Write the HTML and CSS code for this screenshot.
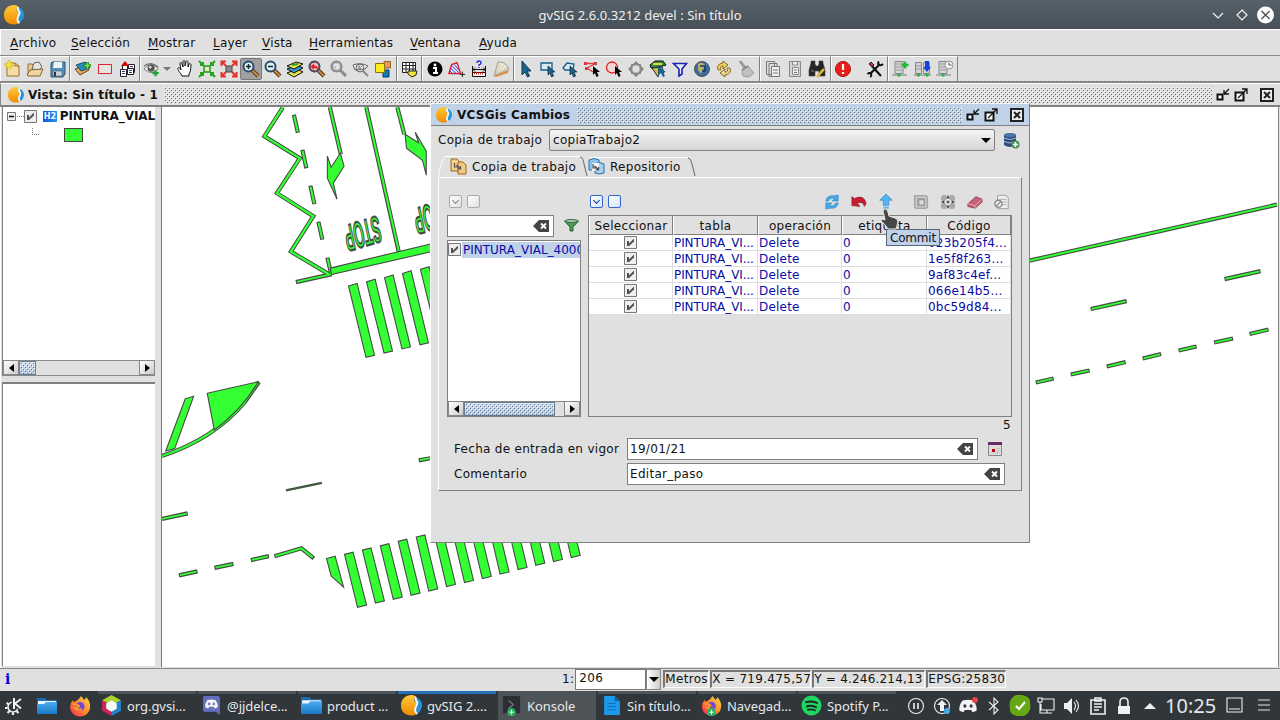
FILE: index.html
```html
<!DOCTYPE html>
<html lang="es">
<head>
<meta charset="utf-8">
<title>gvSIG 2.6.0.3212 devel : Sin título</title>
<link rel="stylesheet" href="styles.css">
</head>
<body>
<svg class="defs" width="0" height="0">
<defs>
<linearGradient id="gold" x1="0" y1="0" x2="0" y2="1"><stop offset="0" stop-color="#ffc83c"/><stop offset="1" stop-color="#f08c00"/></linearGradient>
<linearGradient id="fold" x1="0" y1="0" x2="0" y2="1"><stop offset="0" stop-color="#4aaef0"/><stop offset="1" stop-color="#1a78c8"/></linearGradient>
<linearGradient id="fx" x1="1" y1="0" x2="0" y2="1"><stop offset="0" stop-color="#ffe14a"/><stop offset=".5" stop-color="#ff8a2a"/><stop offset="1" stop-color="#f0245c"/></linearGradient>
<symbol id="gvsig" viewBox="0 0 20 20"><path d="M10 0C4 0 0 4 0 10s4 9.500 10 9.500c2 0 4-1 5-1.500-3-2-2-4 0-7 1-2 0-4-2-5-1-1-.5-3 1-4.500C13 .4 11 0 10 0z" fill="url(#gold)"/><path d="M15 2.500c-2 2 0 4 1 5 1 2-1 5-1.500 7-.3 2 1 3 1.500 3 3-2.500 4-5 4-8s-2-6-5-7z" fill="#2196dc"/><path d="M14.500 2c-2 2 0 3.500 1 5 .8 2-2.500 5-2 8 .2 1.500 1 2.500 2 3" fill="none" stroke="#eef6fc" stroke-width="2"/></symbol>
<symbol id="new" viewBox="0 0 18 18"><path d="M3 3h8l4 3v10H3z" fill="#f4dca4" stroke="#98712c"/><path d="M11 3v3h4" fill="none" stroke="#98712c"/><path d="M5 0l1.300 3L9 2 7.500 4.500 10 6 7 6.500 6.500 9 4.500 7 2 8.500 3 5.500 0 4.500 3 3z" fill="#f5e53a" stroke="#c5a500" stroke-width=".5"/></symbol>
<symbol id="open" viewBox="0 0 18 18"><path d="M2 14V4h4l2 2h6v9z" fill="#e8ca90" stroke="#94723c"/><path d="M6 9l2-6 5-1 3 5-3 3z" fill="#e4e4e4" stroke="#444" stroke-width=".8"/><path d="M1 15l3-5 13-1-3 7H2z" fill="#eed5a4" stroke="#86632c"/></symbol>
<symbol id="save" viewBox="0 0 18 18"><path d="M4 2h13v12l-2 3H3V4z" fill="#5890b8" stroke="#2c5270"/><path d="M6 2h8v6H5z" fill="#eef3f6"/><path d="M5 11h9v5H5z" fill="#ccd4da" stroke="#355a78" stroke-width=".6"/><path d="M7 12v4" stroke="#333" stroke-width="2"/></symbol>
<symbol id="addlayer" viewBox="0 0 18 18"><path d="M1 9l10-4 4 5-9 5z" fill="#e1a958" stroke="#66421c"/><path d="M2 5l9-3 5 6-9 3z" fill="#2787b5" stroke="#25516d"/><path d="M13.500 2v7M10 5.500h7" stroke="#1c7f24" stroke-width="3"/><path d="M13.500 2.500v6M10.500 5.500h6" stroke="#79df63" stroke-width="1.500"/></symbol>
<symbol id="rect" viewBox="0 0 18 18"><path d="M2.500 4.500h13v9h-13z" fill="#e8e4e4" stroke="#d92532"/></symbol>
<symbol id="locate" viewBox="0 0 18 18"><path d="M4.500 5.500h5v8h-5zM10.500 4.500h6v8h-6z" fill="#fff" stroke="#222"/><path d="M2.500 9.500h6v7h-6zM9.500 8.500h6v6h-6z" fill="#fff" stroke="#222"/><path d="M4 11.500h3M4 13.500h3M11 10.500h3M11 12.500h3M12 6.500h3" stroke="#33337c"/><path d="M3 6l4-5 4 5z" fill="#d30000"/></symbol>
<symbol id="eye" viewBox="0 0 20 18"><path d="M1 9q8-10 16 0-8 8-16 0z" fill="#eee" stroke="#777"/><path d="M1 6q7-6 16 1" fill="none" stroke="#777" stroke-width="1.500"/><circle cx="9" cy="8" r="4" fill="#555"/><circle cx="8" cy="7" r="1.500" fill="#ddd"/><path d="M14 10v7M10.500 13.500h7" stroke="#1ea339" stroke-width="2.500"/></symbol>
<symbol id="hand" viewBox="0 0 18 18"><path d="M6 16C5 13 1 10 2 8c1-1 2 0 3 2L4 4c0-2 2-2 2 0l1 3V2c0-2 2-2 2 0v4l1-4c0-2 2-1 2 0v5l1-3c1-1 2 0 2 1-.5 4 0 6-2 9v2z" fill="#fff" stroke="#111"/></symbol>
<symbol id="zin" viewBox="0 0 18 18"><path d="M6 6h6v6H6z" fill="#efe9c0" stroke="#159b15" stroke-width="1.500"/><path d="M1 1l4 4M17 1l-4 4M1 17l4-4M17 17l-4-4M2 5h3V2M13 2v3h3M2 13h3v3M13 16v-3h3" fill="none" stroke="#23a31c" stroke-width="2"/></symbol>
<symbol id="zfull" viewBox="0 0 18 18"><path d="M6 6h6v6H6z" fill="#888" stroke="#444"/><path d="M2 2l4 4M16 2l-4 4M2 16l4-4M16 16l-4-4M1.500 6V1.500H6M12 1.500h4.500V6M1.500 12v4.500H6M12 16.500h4.500V12" fill="none" stroke="#e3322a" stroke-width="2"/></symbol>
<symbol id="mag" viewBox="0 0 18 18"><path d="M10 10l6 6" stroke="#53330f" stroke-width="4"/><path d="M10 10l6 6" stroke="#ca8d42" stroke-width="2"/><circle cx="6.500" cy="6.500" r="5" fill="#d9f0f6" stroke="#284e6c" stroke-width="2"/></symbol>
<symbol id="magin" viewBox="0 0 18 18"><use href="#mag"/><path d="M6.500 4v5M4 6.500h5" stroke="#222" stroke-width="1.500"/></symbol>
<symbol id="magout" viewBox="0 0 18 18"><use href="#mag"/><path d="M4 6.500h5" stroke="#222" stroke-width="1.500"/></symbol>
<symbol id="layers" viewBox="0 0 18 18"><path d="M1 13l10-4 6 3-9 5z" fill="#e5e24a" stroke="#101010"/><path d="M1 9l10-4 6 3-9 5z" fill="#3b91c6" stroke="#101010"/><path d="M1 6l9-4 7 2-9 5z" fill="#e8e84b" stroke="#101010"/><path d="M6 5l6-1" stroke="#37983a" stroke-width="2"/></symbol>
<symbol id="magred" viewBox="0 0 18 18"><use href="#mag"/><circle cx="6.500" cy="6.500" r="4.500" fill="#efc6c4" stroke="#7a4a5c" stroke-width="1.500"/><path d="M2.500 6.500l3.500-3v2q4 0 4 4-2-2-4-1.500v2z" fill="#d22"/></symbol>
<symbol id="maggray" viewBox="0 0 18 18"><path d="M10 10l6 6" stroke="#8a8a8a" stroke-width="3"/><circle cx="6.500" cy="6.500" r="5" fill="#c6c6c6" stroke="#888" stroke-width="2"/><path d="M4 5h4v3H6" fill="none" stroke="#eee" stroke-width="1.500"/></symbol>
<symbol id="magmap" viewBox="0 0 18 18"><path d="M1 5q8-3 15 1l-3 3-10 1z" fill="#eee" stroke="#666"/><path d="M11 11l5 5" stroke="#888" stroke-width="2"/><circle cx="8" cy="8" r="4" fill="none" stroke="#666"/><path d="M5 5l5 5M9 4L5 10M11 5l-5 5" stroke="#777" stroke-width=".7"/></symbol>
<symbol id="squares" viewBox="0 0 18 18"><path d="M9 10h6v7H9z" fill="#087cb8" stroke="#034168"/><path d="M10 1.500h6.500V8H10z" fill="#e89858" stroke="#99602c"/><path d="M1.500 3.500h9v9h-9z" fill="#fbec20" stroke="#8a7400"/></symbol>
<symbol id="grid" viewBox="0 0 18 18"><path d="M2.500 2.500h13v10h-13zM2 5.500h14M2 9h14M6 2v10M9.500 2v10M13 2v10" fill="#fff" stroke="#222"/><path d="M8 11h9l-1 4-4 2-4-3z" fill="#f1e633" stroke="#222"/></symbol>
<symbol id="info" viewBox="0 0 18 18"><circle cx="9" cy="9" r="7.500"/><circle cx="9" cy="5" r="1.400" fill="#fff"/><path d="M7 8h3v5m-3 0h5" fill="none" stroke="#fff" stroke-width="2"/></symbol>
<symbol id="area" viewBox="0 0 20 18"><path d="M1 14L4 4l6-2 4 12z" fill="#e4e7fb" stroke="#e11b22" stroke-width="1.500"/><path d="M4 5l8 8M7 4l5 6M3 8l6 6M2 11l3 3" stroke="#1c38d2"/><path d="M16 12v6M13 15h6" stroke="#111"/></symbol>
<symbol id="dist" viewBox="0 0 18 18"><path d="M2.500 6v7M15.500 6v7M3 9.500h12M5 7.500l-2 2 2 2M13 7.500l2 2-2 2" fill="none" stroke="#111"/><path d="M2.500 12.500h13v4h-13z" fill="#fff" stroke="#111"/><path d="M4 13.500h10" stroke="#e4221f" stroke-width="2" stroke-dasharray="1 1"/><path d="M7 3q0-2 2-2t2 2q0 1-2 2v1M9 7v1" fill="none" stroke="#1c2dd7" stroke-width="1.400"/></symbol>
<symbol id="fan" viewBox="0 0 18 18"><path d="M2 16L6 2q8-1 11 7z" fill="#eee9d9" stroke="#8e8877" stroke-width=".8"/><path d="M2 16l7-13M2 16L13 4M2 16L16 7" stroke="#b9b19a" stroke-width=".7"/><path d="M2 16l15-6-1 3-12 4z" fill="#dc8f4b"/></symbol>
<symbol id="ptr" viewBox="0 0 18 18"><path d="M5 1v14l3-3 2.500 5 2-1L10 11h4z" fill="#19658f" stroke="#143850"/></symbol>
<symbol id="ptrrect" viewBox="0 0 18 18"><path d="M2 3h11v7H2z" fill="#dce9ef" stroke="#175e86" stroke-width="1.300"/><path d="M9 6v9l2-2 1.500 4 2-1-1.500-4h3z" fill="#19658f" stroke="#123" stroke-width=".7"/></symbol>
<symbol id="ptrpoly" viewBox="0 0 18 18"><path d="M2 8l4-5 7 1-1 6H4z" fill="#dce9ef" stroke="#175e86" stroke-width="1.300"/><path d="M9 6v9l2-2 1.500 4 2-1-1.500-4h3z" fill="#19658f" stroke="#123" stroke-width=".7"/></symbol>
<symbol id="ptrline" viewBox="0 0 18 18"><path d="M2 3.500h11M12 4L4 8l6 4" fill="none" stroke="#d83a3d" stroke-width="1.300"/><path d="M1 2h3v3H1zM11 2h3v3h-3zM2 7h3v3H2z" fill="#d83a3d"/><path d="M10 6v9l2-2 1.500 4 2-1-1.500-4h3z"/></symbol>
<symbol id="ptrcirc" viewBox="0 0 18 18"><circle cx="7" cy="7.500" r="5.500" fill="#eed7d7" stroke="#e51c20" stroke-width="1.300"/><path d="M10 6v9l2-2 1.500 4 2-1-1.500-4h3z"/></symbol>
<symbol id="ring" viewBox="0 0 18 18"><path d="M9 1l3 3h2v2l3 3-3 3v2h-2l-3 3-3-3H4v-2L1 9l3-3V4h2z" fill="#858585"/><circle cx="9" cy="9" r="4" fill="#e0e0e0" stroke="#aaa"/></symbol>
<symbol id="bird" viewBox="0 0 18 18"><path d="M1 5l5-4h8l3 4-7 2-8 1z" fill="#318b3c" stroke="#111"/><path d="M4 4h9" stroke="#edd13b" stroke-width="2"/><path d="M3 8l10-1 2 6-5-1-1 5-4-6z" fill="#d8b83a" stroke="#143044"/><path d="M9 6v10l3-3 2 4 2-1-2-4h3z" fill="#1b618d"/></symbol>
<symbol id="filter" viewBox="0 0 18 18"><path d="M2.500 3.500h13L11 9v5l-3 2V9z" fill="#e9ecff" stroke="#1b20b5" stroke-width="1.600"/></symbol>
<symbol id="globe" viewBox="0 0 18 18"><circle cx="9" cy="9" r="7.500" fill="#396d9f" stroke="#4d5054"/><path d="M5 4q4-3 7 1l-2 5-2 4-3-4z" fill="#b7ae72"/><path d="M7 6h5v5H9" fill="none" stroke="#183b60" stroke-width="1.500"/></symbol>
<symbol id="swap" viewBox="0 0 18 18"><path d="M3 10Q1 4 8 3V1l5 4-5 4V6Q4 6 6 10z" fill="#f0cf66" stroke="#8a6a16"/><path d="M15 8q2 6-5 7v2l-5-4 5-4v3q4 0 2-4z" fill="#eed792" stroke="#8a6a16"/></symbol>
<symbol id="brush" viewBox="0 0 18 18"><path d="M3 1l5 7" stroke="#999" stroke-width="3"/><path d="M5 10l6-4 6 7-5 4-6-1z" fill="#c1c1c1" stroke="#999"/><path d="M5 10l6-4" stroke="#888" stroke-width="2"/></symbol>
<symbol id="copy" viewBox="0 0 18 18"><path d="M2.500 1.500h8v13h-8zM5 3.500h8v13H5z" fill="#dedede" stroke="#777"/><path d="M7.500 6.500h8v10h-8z" fill="#f0f0f0" stroke="#777"/><path d="M9 10h5M9 13h5" stroke="#777"/></symbol>
<symbol id="paste" viewBox="0 0 18 18"><path d="M3.500 1.500h11v15h-11z" fill="#d5d5d5" stroke="#888"/><path d="M6.500 2v3h5V2M6.500 7.500h6v7h-6z" fill="#f0f0f0" stroke="#888"/><path d="M8 10h3M8 12.500h3" stroke="#777"/></symbol>
<symbol id="bino" viewBox="0 0 18 18"><path d="M3 3V1h4v3l1 2h2l1-2V1h4v2l2 7v6h-6v-5H7v5H1v-6z" fill="#252525" stroke="#444" stroke-width=".6"/><path d="M3 11h3M12 11h3" stroke="#888"/><path d="M9 17l7-8" stroke="#efb636" stroke-width="2.500"/></symbol>
<symbol id="alert" viewBox="0 0 18 18"><circle cx="9" cy="9" r="7.500" fill="#e82018" stroke="#ae1009"/><path d="M9 4v6M9 12v2" stroke="#fff" stroke-width="2.200"/></symbol>
<symbol id="tools" viewBox="0 0 18 18"><path d="M4 14L14 4M5 5l10 11" stroke="#111" stroke-width="2.200"/><path d="M1.500 14q2-2 3.500 0 1 2-1 3M13 1.500q-2 2 0 3.500 2 1 4-1" fill="none" stroke="#111" stroke-width="1.800"/><path d="M3 4l2-2 3 3-2 2z" fill="#bb333c" stroke="#222"/></symbol>
<symbol id="server" viewBox="0 0 18 18"><path d="M3 1.500h8v12H3z" fill="#d4d4d4" stroke="#888"/><path d="M4 4h6M4 7h6M4 10h6" stroke="#999"/><path d="M0 15h15" stroke="#777"/><circle cx="7" cy="15" r="1.800" fill="#22b94c"/></symbol>
<symbol id="srvadd" viewBox="0 0 18 18"><use href="#server"/><path d="M13 1.500v7M9.500 5h7" stroke="#20b93e" stroke-width="2.600"/></symbol>
<symbol id="srvdown" viewBox="0 0 18 18"><path d="M1.500 2.500h6v11h-6zM9.500 2.500h6v11h-6z" fill="#d4d4d4" stroke="#888"/><path d="M2 6h5M2 9h5" stroke="#999"/><path d="M0 15h17" stroke="#777"/><circle cx="4.500" cy="15" r="1.800" fill="#22b94c"/><path d="M11 1v6H9l4 5 4-5h-2V1z" fill="#1741dc"/><circle cx="13" cy="15" r="1.800" fill="#22b94c"/></symbol>
<symbol id="srvclock" viewBox="0 0 18 18"><use href="#server"/><circle cx="13" cy="5" r="4" fill="#f5f5f5" stroke="#999"/><path d="M13 2.500V5h2.500" fill="none" stroke="#555"/></symbol>
<symbol id="erase" viewBox="0 0 17 14"><path d="M0 7l6-6h10v12H6z" fill="#444"/><path d="M8 4.500l5 5M13 4.500l-5 5" stroke="#fff" stroke-width="1.800"/></symbol>
<symbol id="cbx" viewBox="0 0 13 13"><path d="M.5.500h12v12H.5z" fill="#eee" stroke="#777"/><path d="M3 5h2v2.500L9.500 3H10v2.500L5 10H3z" fill="#505050"/></symbol>
<symbol id="folder" viewBox="0 0 20 18"><path d="M0 1h8l2 2h10v14H0z" fill="#1c6cad"/><path d="M1 4h18v4H1z" fill="#eef6fb"/><path d="M0 7h7l2-2h11v12H0z" fill="url(#fold)"/></symbol>
<symbol id="firefox" viewBox="0 0 22 22"><path d="M12 1q2 2 3 4 2-1 2-3 5 5 4 11a10 9 0 01-20-1q0-4 3-7 0 2 1 2 4-1 7-6z" fill="url(#fx)"/><circle cx="11" cy="11.500" r="4.500" fill="#7644d8"/><path d="M4 9q4 0 6 2-1 2-4 2 3 3 7 1" fill="none" stroke="#ff9a20" stroke-width="2"/></symbol>
<symbol id="discord" viewBox="0 0 24 18"><path d="M5 2q7-2 14 0 5 7 4 13l-5 2-2-3H8l-2 3-5-2Q0 8 5 2z" fill="#f3f3f5"/><ellipse cx="8" cy="9" rx="2" ry="2.300" fill="var(--eyes)"/><ellipse cx="16" cy="9" rx="2" ry="2.300" fill="var(--eyes)"/></symbol>
<symbol id="min" viewBox="0 0 14 14"><path d="M1.500 6.500h5v5h-5z" fill="#fff" stroke="#111" stroke-width="2"/><path d="M13 1L8 6M8 2v4h5" fill="none" stroke="#111" stroke-width="1.300"/></symbol>
<symbol id="max" viewBox="0 0 14 14"><path d="M1.500 4.500h8v8h-8z" fill="#fff" stroke="#111" stroke-width="2"/><path d="M4 10l9-9M8 1h5v5" fill="none" stroke="#111" stroke-width="1.300"/></symbol>
<symbol id="close" viewBox="0 0 14 14"><path d="M1 1h12v12H1z" fill="#eee" stroke="#222" stroke-width="2"/><path d="M4 4l6 6M10 4l-6 6" stroke="#222" stroke-width="2"/></symbol>
</defs></svg>

<header class="titlebar"><svg class="logo"><use href="#gvsig"/></svg><h1>gvSIG 2.6.0.3212 devel : Sin título</h1>
<svg class="winbtns" viewBox="0 0 70 20"><path d="M3 8l5 5 5-5M32 5l5 5-5 5-5-5z" fill="none" stroke="#eff0f1" stroke-width="1.200"/><circle cx="55.500" cy="10" r="8.500" fill="#fcfcfc"/><path d="M51.500 6l8 8M59.500 6l-8 8" stroke="#475057" stroke-width="1.300"/></svg></header>
<nav class="menubar"><span><u>A</u>rchivo</span><span><u>S</u>elección</span><span><u>M</u>ostrar</span><span><u>L</u>ayer</span><span><u>V</u>ista</span><span><u>H</u>erramientas</span><span><u>V</u>entana</span><span><u>A</u>yuda</span></nav>
<div class="toolbar">
<div class="grp g1"><svg><use href="#new"/></svg><svg><use href="#open"/></svg><svg><use href="#save"/></svg></div>
<div class="grp g2"><svg><use href="#addlayer"/></svg><svg><use href="#rect"/></svg><svg><use href="#locate"/></svg></div>
<div class="grp g3"><svg><use href="#eye"/></svg><i class="drop"></i><svg><use href="#hand"/></svg><svg><use href="#zin"/></svg><svg><use href="#zfull"/></svg><svg class="on"><use href="#magin"/></svg><svg><use href="#magout"/></svg><svg><use href="#layers"/></svg><svg><use href="#magred"/></svg><svg><use href="#maggray"/></svg><svg><use href="#magmap"/></svg><svg><use href="#squares"/></svg></div>
<div class="grp g4"><svg><use href="#grid"/></svg></div>
<div class="grp g5"><svg><use href="#info"/></svg><svg><use href="#area"/></svg><svg><use href="#dist"/></svg><svg><use href="#fan"/></svg></div>
<div class="grp g6"><svg><use href="#ptr"/></svg><svg><use href="#ptrrect"/></svg><svg><use href="#ptrpoly"/></svg><svg><use href="#ptrline"/></svg><svg><use href="#ptrcirc"/></svg><svg><use href="#ring"/></svg><svg><use href="#bird"/></svg><svg><use href="#filter"/></svg><svg><use href="#globe"/></svg><svg><use href="#swap"/></svg><svg><use href="#brush"/></svg></div>
<div class="grp g7"><svg><use href="#copy"/></svg><svg><use href="#paste"/></svg><svg><use href="#bino"/></svg></div>
<div class="grp g8"><svg><use href="#alert"/></svg><svg><use href="#tools"/></svg></div>
<div class="grp g9"><svg><use href="#srvadd"/></svg><svg><use href="#srvdown"/></svg><svg><use href="#srvclock"/></svg></div>
</div>
<div class="viewtitle"><svg class="vlogo"><use href="#gvsig"/></svg><b>Vista: Sin título - 1</b><i class="bumps"></i><svg class="wb"><use href="#min"/></svg><svg class="wb"><use href="#max"/></svg><svg class="wb last"><use href="#close"/></svg></div>
<main>
<aside>
<div class="toc">
<div class="node"><svg class="tree" viewBox="0 0 36 32"><path d="M3.500 5.500h8v8h-8z" fill="#eee" stroke="#777"/><path d="M5 9.500h5" stroke="#111" stroke-width="1.500"/><path d="M13 9.500h7M28.500 21v6.500H40" fill="none" stroke="#777" stroke-dasharray="1 1"/></svg><svg class="cb"><use href="#cbx"/></svg><span class="h2">H2</span><b>PINTURA_VIAL</b></div>
<div class="swrow"><i class="swatch"></i></div>
<div class="grow"></div>
<div class="scroll"><i class="sb l"></i><i class="thumb t1"></i><i class="track"></i><i class="sb r"></i></div>
</div>
<div class="lower"></div>
</aside>
<svg class="map" viewBox="162 107 1117 560">
<g fill="none" stroke="#454c45" stroke-width="4.200" stroke-linecap="butt" id="lines">
<path id="zig" d="M283 107L264.500 136 300 158 277 193 313.500 216 291 251.500 329 274"/>
<path id="dash" d="M294 114.500l4 18M302.500 149.500l4 18.500M310.500 185.500l4 18.500M318.500 221.500l4 18M327.500 257.500l4 17M296 282l36-8M366.500 107L399 252M397.500 107l7 27M330 107l11 47M1029 260.800L1278 204.500M274.500 556.500l27-8 12.500 10M162 456Q214 439 245 402L259 382"/>
<path id="small" d="M179 575.500l18.500-4M214.500 568l19-4M251 560.300l18-4M162 519l25.700-5.500M419 460.500l13-2.500M1036.500 382.500l18-4M1071.500 374.500l19-4M1107.500 366.500l19-4.500M1143.500 358.500l18.500-4.500M1179.500 350.500l18-4M1215 342.500l19-4M1250.500 334l19-4.500M1091.500 309l36-8M1225.500 279l36-8"/>
</g>
<g fill="none" stroke="#3f3" stroke-width="2"><use href="#zig" stroke-width="2"/><path d="M283 107L264.500 136 300 158 277 193 313.500 216 291 251.500 328 273.500M294.200 115.500l3.600 16M302.700 150.500l3.600 16.500M310.700 186.500l3.600 16.500M318.700 222.500l3.600 16M327.700 258.500l3.600 15M297 281.800l35-7.800M366.500 107L399 251M397.500 107l7 27M330 107l11 47M1029 260.800L1278 204.500M275.500 556.200l26-7.700 11.500 9.200M162 456Q214 439 245 402L258 383"/><path stroke-width="1.800" d="M180 575.300l16.500-3.600M215.500 567.800l17-3.600M252 560.100l16-3.600M162 519l24.700-5.300M420 460.300l12-2.300M1037.500 382.300l16-3.600M1072.500 374.300l17-3.600M1108.500 366.300l17-4M1144.500 358.300l16.500-4M1180.500 350.300l16-3.600M1216 342.300l17-3.600M1251.500 333.800l17-4M1092.500 308.800l34-7.600M1226.500 278.800l34-7.600"/></g>
<path d="M286 490.500l36-7.500" stroke="#3f573c" stroke-width="2.200"/>
<g fill="#3f3" stroke="#444c44" stroke-width="1.100">
<path d="M340.500 153l3.700 13-10.700 17 3.700 16-9.700-21v-22l3.800 11zM405.300 134l13.400 8.500-3.200-10.500 11 19v24l-3.800-15-16-12zM330.500 268L432 243.500v8L331.500 274.500zM185.300 398.700l8.400-2.400-19 52.400-9 2.300zM207.300 393.300l51-11.600Q242 410 214.300 430zM326.700 558.700l8.600-2.400 8.400 31-12.400-11.300z"/>
<path d="M348.700 286l8.600-2.700 17.400 72-8.500 2zM366.700 281.800l8.600-2.700 17.400 72-8.500 2zM384.700 277.600l8.600-2.700 17.400 72-8.500 2zM402.700 273.400l8.600-2.700 17.400 72-8.500 2zM420.700 269.200l8.600-2.700 17.400 72-8.500 2z"/>
<path d="M344.700 554.500l8.600-2.200 13.400 53-9 2.200zM362.600 550.300l8.600-2.200 13.400 53-9 2.200zM380.500 546l8.600-2.200 13.400 53.500-9 2.200zM398.400 541.500l8.600-2.200 13.300 54-9 2.200zM416.500 537.200l8.600-2.200 12.900 54-9 2.200zM434 532l8.600-2.200 13.200 54.800-9 2.200zM452 528l8.600-2.200 13.200 54.800-9 2.200zM469.800 524l8.600-2.200 13.200 54.800-9 2.200zM487.600 519.500l8.600-2.200 13.200 54.800-9 2.200zM505.600 515l8.600-2.200 13.200 54.800-9 2.200zM523.300 510.700l8.600-2.200 13.200 54.800-9 2.200zM541 507l8.600-2.200 13.200 54.800-9 2.200zM558.800 502.900l8.600-2.200 13.200 54.800-9 2.200z"/>
<text class="paint" transform="matrix(-1.020 .32 -.6 -2.900 378 215.500)">STOP</text>
<text class="paint" transform="matrix(-1.020 .32 -.6 -2.900 447.500 198.500)">STOP</text>
</g>
</svg>
</main>

<footer class="status"><b class="inf">i</b><span class="ratio">1:</span><span class="field">206</span><span class="arrow"></span><span class="cell c1">Metros</span><span class="cell c2">X = 719.475,57</span><span class="cell c3">Y = 4.246.214,13</span><span class="cell c4">EPSG:25830</span></footer>

<footer class="taskbar">
<div class="launch"><svg viewBox="0 0 20 20"><circle cx="8" cy="11" r="5" fill="none" stroke="#eee" stroke-width="1.600"/><path d="M1.500 7l2 1M0 12h2.500M2.500 17l2-2M8 19v-2.500M13.500 17l-2-2" stroke="#eee" stroke-width="2.200"/><path d="M9 1v13M16.500 2L10 7.500l6.500 5.500" stroke="#31363b" stroke-width="4.500" fill="none"/><path d="M9 2v11M16 3l-6 4.500 6 5" stroke="#eff0f1" stroke-width="2" fill="none"/></svg><svg><use href="#folder"/></svg><svg><use href="#firefox"/></svg></div>
<div class="task"><svg viewBox="0 0 20 20"><path d="M10 0l9 5-9 5-9-5z" fill="#aad230"/><path d="M1 5l9 5v10l-9-5z" fill="#c8255d"/><path d="M19 5l-9 5v10l9-5z" fill="#2384cf"/><path d="M10 5l5 3v5l-5 3-5-3V8z" fill="#f5faf2"/></svg>org.gvsi...</div>
<div class="task"><svg class="dsc" viewBox="0 0 20 20"><path d="M3 1h13q2 0 2 2v16l-4-3H3q-1 0-1-2V3q0-2 1-2z" fill="#6370c0"/><use href="#discord" x="3.500" y="3" width="13" height="11"/></svg>@jjdelce...</div>
<div class="task"><svg><use href="#folder"/></svg>product ...</div>
<div class="task active"><svg><use href="#gvsig"/></svg>gvSIG 2....</div>
<div class="task hot"><svg viewBox="0 0 20 22"><path d="M1 1h18v18H1z" fill="#2a2e32"/><path d="M7 6l5 4-5 4" fill="none" stroke="#aaa"/><circle cx="10" cy="18" r="4.500" fill="#27ae60"/><path d="M10 15.500v5M7.500 18h5" stroke="#fff"/></svg>Konsole</div>
<div class="task"><svg viewBox="0 0 20 20"><path d="M3 1h10l5 5v13H3z" fill="#1b99ea"/><path d="M13 1l5 5h-5z" fill="#0a69ab"/><path d="M6 8h8M6 11h8M6 14h8" stroke="#0873b8"/></svg>Sin título...</div>
<div class="task"><svg viewBox="0 0 22 22"><use href="#firefox"/><circle cx="11" cy="18" r="4.500" fill="#27ae60"/><path d="M11 15.500v5M8.500 18h5" stroke="#fff"/></svg>Navegad...</div>
<div class="task"><svg viewBox="0 0 20 20"><circle cx="10" cy="10" r="9.500" fill="#1ed760"/><path d="M4 7q7-2 12 1M5 11q5-2 10 1M6 14q5-1 8 1" fill="none" stroke="#202527" stroke-width="1.800"/></svg>Spotify P...</div>
<div class="tray">
<svg viewBox="0 0 20 20"><circle cx="10" cy="10" r="7.500" class="ln"/><path d="M8 7v6M12 7v6" class="ln b"/></svg>
<svg viewBox="0 0 20 20"><circle cx="10" cy="10" r="7.500" class="ln"/><path d="M10 4l5 5h-3v6H8V9H5z" fill="#eff0f1"/><circle cx="15" cy="15" r="3" fill="#3daee9"/></svg>
<svg class="dt" viewBox="0 0 20 20"><use href="#discord" y="3" width="20" height="14"/><circle cx="17" cy="4" r="3" fill="#ed4245"/></svg>
<svg viewBox="0 0 20 20"><path d="M5 6l9 8-4 4V2l4 4-9 8" class="ln"/></svg>
<svg class="big" viewBox="0 0 22 22"><path d="M7 0h6q9 2 8 8 2 9-6 13H9Q0 20 1 13-1 4 7 0z" fill="#66a814"/><path d="M7 11l3 3 6-7" fill="none" stroke="#fff" stroke-width="2.200"/></svg>
<svg viewBox="0 0 20 20"><path d="M6 3h12v11H5V8M8 17h8M11 14v3M2 2h4v4H2zM4 6v11h4" class="ln"/></svg>
<svg viewBox="0 0 20 20"><path d="M2 7h3l5-5v16l-5-5H2z" fill="#eff0f1"/><path d="M12 6q3 4 0 8M14 4q5 6 0 12" class="ln"/></svg>
<svg viewBox="0 0 20 20"><path d="M3 4h14v14H3zM7 2h6v3H7zM6 8h8M6 11h8M6 14h5" class="ln b"/></svg>
<svg viewBox="0 0 20 20"><path d="M4 10h12v8H4z" fill="#eff0f1"/><path d="M6 10V6q0-4 4-4t4 4v4" class="ln b"/></svg>
<svg viewBox="0 0 20 20"><path d="M4 13l6-6 6 6z" fill="#eff0f1"/></svg>
</div>
<span class="clock">10:25</span>
<svg class="desk" viewBox="0 0 50 20"><path d="M3 3h15v14H3zM5 14h11" class="ln"/><path d="M34 5h12M34 10h12M34 15h12" stroke="#898d90" stroke-width="2"/></svg>
</footer>

<section class="dialog">
<div class="dtitle"><svg class="dlogo"><use href="#gvsig"/></svg><b>VCSGis Cambios</b><i class="bumps"></i><svg class="wb"><use href="#min"/></svg><svg class="wb"><use href="#max"/></svg><svg class="wb last"><use href="#close"/></svg></div>
<div class="copyrow"><label>Copia de trabajo</label><div class="combo">copiaTrabajo2<i></i></div>
<svg viewBox="0 0 17 17"><path d="M1 3q6-4 12 0v10q-6 4-12 0z" fill="#304e79"/><ellipse cx="7" cy="3" rx="6" ry="2" fill="#4d75a6"/><path d="M1 6q6 3 12 0M1 9.500q6 3 12 0" fill="none" stroke="#9fb7d4" stroke-width="1"/><circle cx="12.500" cy="12.500" r="4" fill="#4b9156"/><path d="M12.500 10v5M10 12.500h5" stroke="#fff" stroke-width="1.500"/></svg></div>
<div class="tabs"><svg class="tabline" viewBox="0 0 598 21"><path d="M7 20V17q3-14 6-16.500h135M158 1.500h98" fill="none" stroke="#fff"/><path d="M148 1q3 0 4 7l3 12M256 2q3 0 4 6l3 12" fill="none" stroke="#666"/></svg>
<div class="tab one"><svg viewBox="0 0 17 17"><path d="M1 1h6l3 3v9H1z" fill="#f1cf8e" stroke="#a06516"/><path d="M8 4h5l3 3v9H8z" fill="#f0ca82" stroke="#a06516"/><path d="M4.500 5v4h4M6.500 7l4 4m0-3v3h-3" fill="none" stroke="#555" stroke-width="1.200"/></svg>Copia de trabajo</div>
<div class="tab two"><svg viewBox="0 0 17 17"><path d="M1 2q5-3 10 0v10H1z" fill="#8cc3ee" stroke="#2874ac"/><path d="M7 6q5-3 9 0v9q-5 2-9 0z" fill="#a4d0f3" stroke="#286fa5"/><path d="M4 5h7v8H4z" fill="#eef4fa"/><path d="M5 6v4h3M6.500 8l4 4m0-3v3h-3" fill="none" stroke="#444" stroke-width="1.200"/></svg>Repositorio</div></div>
<div class="pane">
<div class="tools">
<i class="sq dn"></i><i class="sq"></i><i class="sq blue dn gap"></i><i class="sq blue"></i>
<div class="acts">
<svg viewBox="0 0 18 18"><path d="M2 8q1-7 9-6l5-1v7H9l3-3Q6 4 5 8zM16 10q-1 7-9 6l-5 1v-7h7l-3 3q6 1 7-3z" fill="#47a9eb" stroke="#2c7dbd" stroke-width=".6"/></svg>
<svg class="undo" viewBox="0 0 18 18"><path d="M1 3l3 2q11-5 13 6l-2 3q-1-6-8-4l3 4-9-1z" fill="#c71e31" stroke="#8b1726" stroke-width=".7"/></svg>
<svg class="up" viewBox="0 0 18 18"><path d="M9 0l7 7h-4v6H6V7H2z" fill="#55b5f4" stroke="#287eb7" stroke-width=".7"/><path d="M6 15.500h6" stroke="#55b5f4" stroke-width="2"/></svg>
<svg class="sel" viewBox="0 0 18 18"><path d="M2 1h13l2 2v12l-2 2H3l-2-2V2z" fill="#a6a6a6"/><path d="M3.500 3.500h11v11h-11z" fill="none" stroke="#e4e4e4"/><path d="M6.500 6.500h6v6h-6z" fill="#ddd" stroke="#888"/></svg>
<svg viewBox="0 0 18 18"><path d="M3 1h12l2 3v11l-2 2H3l-2-2V4z" fill="#aaa"/><path d="M9 1v16M1 9h16" stroke="#e8e8e8" stroke-width="4"/><path d="M9 1l2.500 4h-5zM9 17l2.500-4h-5zM1 9l4-2.500v5zM17 9l-4-2.500v5zM7.500 7.500h3v3h-3z" fill="#555"/></svg>
<svg viewBox="0 0 18 18"><path d="M1 11l9-8 7 3v3l-8 7-8-2z" fill="#c5617b" stroke="#964158"/><path d="M1 11l8 2 8-7M9 13v3" fill="none" stroke="#eda7b7"/></svg>
<svg viewBox="0 0 18 18"><path d="M4 1.500h10l2 3v12H4z" fill="#eee" stroke="#999"/><path d="M6 6h8M6 9h8M9 12h5" stroke="#aaa"/><circle cx="5" cy="11" r="4" fill="#eee" stroke="#888" stroke-width="1.500"/><path d="M2 14l6-6" stroke="#888" stroke-width="1.500"/></svg>
</div></div>
<div class="cols">
<div class="left"><div class="search"><div class="inp"><svg class="er"><use href="#erase"/></svg></div><svg class="fun" viewBox="0 0 15 13"><path d="M.5 2h14L9 8v4H6V8z" fill="#4e9b55" stroke="#27632f"/><ellipse cx="7.500" cy="2" rx="6.500" ry="1.500" fill="#b4c4b3" stroke="#386c3c"/></svg></div>
<div class="list"><div class="lrow"><svg class="cb"><use href="#cbx"/></svg><span>PINTURA_VIAL_4000</span></div><div class="grow"></div><div class="scroll"><i class="sb l"></i><i class="thumb t2"></i><i class="track"></i><i class="sb r"></i></div></div></div>
<div class="table">
<div class="tr th"><span>Seleccionar</span><span>tabla</span><span>operación</span><span>etiqueta</span><span>Código</span></div>
<div class="tr"><span><svg class="cb"><use href="#cbx"/></svg></span><span class="tn">PINTURA_VI...</span><span>Delete</span><span>0</span><span>023b205f4...</span></div>
<div class="tr"><span><svg class="cb"><use href="#cbx"/></svg></span><span class="tn">PINTURA_VI...</span><span>Delete</span><span>0</span><span>1e5f8f263...</span></div>
<div class="tr"><span><svg class="cb"><use href="#cbx"/></svg></span><span class="tn">PINTURA_VI...</span><span>Delete</span><span>0</span><span>9af83c4ef...</span></div>
<div class="tr"><span><svg class="cb"><use href="#cbx"/></svg></span><span class="tn">PINTURA_VI...</span><span>Delete</span><span>0</span><span>066e14b5...</span></div>
<div class="tr"><span><svg class="cb"><use href="#cbx"/></svg></span><span class="tn">PINTURA_VI...</span><span>Delete</span><span>0</span><span>0bc59d84...</span></div>
</div></div>
<div class="count">5</div>
<div class="form"><label>Fecha de entrada en vigor</label><div class="inp date">19/01/21<svg class="er"><use href="#erase"/></svg></div><svg class="cal" viewBox="0 0 14 14"><path d="M.5.500h13v13H.5z" fill="#ddd" stroke="#888"/><path d="M0 0h14v3H0z" fill="#692b67"/><path d="M4 7h3v3H4z" fill="#ba001b"/><path d="M9 6v6M11 6v6M3 11h7" stroke="#aaa" stroke-dasharray="1 1"/></svg></div>
<div class="form"><label>Comentario</label><div class="inp comm">Editar_paso<svg class="er"><use href="#erase"/></svg></div></div>
</div>
</section>
<div class="tip">Commit</div>
<svg class="cursor" viewBox="0 0 20 22"><path d="M5 1q3-1 4 3l1 4 6 2q3 1 3 4l-2 7H9q-3-5-7-8 0-3 4-1L4 3z" fill="#474747" stroke="#eee" stroke-width="1"/></svg>
</body>
</html>
```
FILE: styles.css
```css
*{box-sizing:border-box}
body{margin:0;width:1280px;height:720px;overflow:hidden;position:relative;display:flex;flex-direction:column;background:#e0e0e0;color:#111;font:12px "DejaVu Sans",sans-serif;letter-spacing:.3px;white-space:nowrap}
svg{flex:none;display:block}
.defs{position:absolute}
b{letter-spacing:0}
.titlebar{height:29px;flex:none;display:flex;align-items:center;padding:0 0 0 4px;background:linear-gradient(#56616a,#475057);color:#eff0f1;font-family:"Noto Sans",sans-serif;letter-spacing:.05px}
.logo{width:20px;height:20px}
h1{flex:1;margin:0 0 0 46px;text-align:center;font-size:13px;font-weight:400}
.winbtns{width:70px;height:20px}
.menubar{height:26px;flex:none;display:grid;grid-template-columns:61px 77px 65px 49px 47px 101px 69px 60px;align-items:center;padding-left:9px;border-top:1px solid #fff;border-left:1px solid #fff;letter-spacing:.2px}
.menubar u{text-underline-offset:2px}
.toolbar{height:28px;flex:none;display:flex;border-top:1px solid #888;border-bottom:2px solid #888}
.grp{height:25px;display:flex;align-items:center;border-right:1px solid #808080;border-top:1px solid #fff;border-left:1px solid #fff;flex:none}
.grp svg{width:22px;height:22px;padding:2px}
.g1{width:70px;padding-left:1px}.g2{width:70px;padding-left:1px}.g3{width:257px}.g4{width:25px}.g5{width:92px;padding-left:1px}.g6{width:246px}.g7{width:71px;padding-left:1px}.g8{width:57px}.g9{width:70px;padding-left:1px}
.g8 svg+svg{margin-left:10px}
.drop{height:0;border:4px solid transparent;border-top-color:#777;border-bottom:0;width:8px;margin:0 3px 0 0}
.on{background:#a0a0a0;border:1px solid #777;padding:1px!important;border-radius:2px}
.viewtitle{height:24px;flex:none;display:flex;align-items:center;padding:0 6px 0 7px;border-bottom:2px solid #808080;border-top:1px solid #fff;border-left:1px solid #888}
.viewtitle b,.dtitle b{font-size:12px}
.vlogo{width:16px;height:16px;margin-right:4px}
.viewtitle b{width:131px;margin-right:5px;letter-spacing:.15px}
.bumps{flex:1;height:16px;background:url("data:image/svg+xml,%3Csvg xmlns='http://www.w3.org/2000/svg' width='4' height='4' shape-rendering='crispEdges'%3E%3Cpath d='M0 0h1v1H0zM2 2h1v1H2z' fill='%23fff'/%3E%3Cpath d='M1 1h1v1H1zM3 3h1v1H3z' fill='%23666'/%3E%3C/svg%3E")}
.wb{width:14px;height:14px;margin-left:4px}
.wb.last{margin-left:12px}
main{height:561px;flex:none;display:flex}
aside{width:161px;flex:none;padding-left:1px;border-left:1px solid #fff;background:#e0e0e0}
.toc,.lower{width:153px;background:#fff;border-left:1px solid #808080}
.toc{height:269px;display:flex;flex-direction:column;border-bottom:1px solid #888}
.node{height:20px;display:flex;align-items:flex-start;padding-left:1px}
.tree{width:36px;height:32px;margin-right:-16px}
.cb{width:13px;height:13px}
.node .cb{margin-top:3px}
.h2{width:15px;height:11px;margin:4px 3px 0 6px;background:linear-gradient(90deg,#1555d8,#2496f4);color:#fff;font:bold 8px/11px "DejaVu Sans";text-align:center;letter-spacing:0}
.node b{font-size:12px;line-height:18px;letter-spacing:-.1px}
.swrow{height:16px;padding:1px 0 0 61px}
.swatch{display:block;width:19px;height:14px;background:#3f3;border:1px solid #444}
.grow{flex:1}
.scroll{height:15px;display:flex;border-top:1px solid #888;background:#e0e0e0}
.sb{width:16px;display:flex;align-items:center;justify-content:center;background:linear-gradient(135deg,#fff,#ccc);border:1px solid #888;border-top:0}
.sb:before{content:"";border:4px solid transparent;border-right:5px solid #000;border-left:0}
.sb.r:before{border-right:0;border-left:5px solid #000}
.thumb{background:url("data:image/svg+xml,%3Csvg xmlns='http://www.w3.org/2000/svg' width='4' height='4' shape-rendering='crispEdges'%3E%3Cpath d='M0 0h1v1H0zM2 2h1v1H2z' fill='%23fff'/%3E%3Cpath d='M1 1h1v1H1zM3 3h1v1H3z' fill='%23678'/%3E%3C/svg%3E") 2px 2px,linear-gradient(#d2e1f2,#b0c4de);border:1px solid #6a7b91}
.t1{width:17px}.t2{width:91px}
.track{flex:1}
.lower{height:284px;margin-top:6px;border-top:2px solid #808080}
.map{width:1118px;height:560px;background:#fff;border-left:1px solid #777;border-right:1px solid #888}
.paint{font:bold 12.500px "Liberation Sans",sans-serif;letter-spacing:.2px;stroke-width:.75}
.status{height:23px;flex:none;display:flex;align-items:center;border-top:1px solid #888;padding:0 0 2px 5px}
.inf{font:bold 16px/16px "DejaVu Serif",serif;font-size:14px;color:#00d}
.inf+.ratio{flex:none;width:565px;text-align:right;padding-right:1px}
.field{width:71px;height:21px;line-height:17px;background:#fff;border:1px solid #777;padding-left:3px}
.arrow{width:15px;height:21px;display:flex;align-items:center;justify-content:center;background:linear-gradient(90deg,#fff,#ccc);border:1px solid #888;margin-right:2px}
.arrow:before,.combo i{content:"";border:5px solid transparent;border-top-color:#000;border-bottom:0}
.cell{height:18px;line-height:14px;border:1px solid #fff;border-top:2px solid #777;border-left:2px solid #777;margin-right:1px;flex:none}
.c1{width:46px}.c2{width:101px}.c3{width:113px;letter-spacing:.2px}.c4{width:80px}
.taskbar{height:30px;flex:none;display:flex;background:#31363b;color:#e6e8ea;font:13px "Noto Sans",sans-serif;letter-spacing:0}
.launch{width:98px;display:flex;align-items:center;padding:0 0 1px 5px}
.launch svg{width:20px;height:20px;margin-right:12px}
.launch svg:last-child{width:22px;height:22px;margin:0}
.task{width:98px;margin-right:2px;flex:none;display:flex;align-items:center;gap:5px;padding-left:3px;border-top:3px solid #4d5358;padding-bottom:4px;letter-spacing:-.05px}
.task svg{width:21px;height:21px}
.active{border-top-color:#2471b8}.hot{background:#4e5358}
.dsc{--eyes:#6370c0}.dt{--eyes:#31363b}
.tray{display:flex;align-items:center;width:260px;padding:0 0 1px 8px;gap:6px;flex:none}
.tray svg{width:20px;height:20px}
.tray .big{width:22px;height:22px;margin:0 -1px}
.ln{fill:none;stroke:#eff0f1;stroke-width:1.100}.ln.b{stroke-width:1.600}
.clock{font-size:20px;line-height:29px;width:58px;padding-left:7px}
.desk{width:50px;height:20px;margin:4px 0 0 8px}
.dialog{position:absolute;left:430px;top:103px;width:600px;height:440px;background:#e0e0e0;border:1px solid #808080;border-left-color:#fff;border-top-color:#fff}
.dtitle{height:22px;display:flex;align-items:center;padding:0 5px;background:#c0d2e8;border-bottom:1px solid #808080}
.dlogo{width:16px;height:16px;margin-right:5px}
.dtitle b{width:113px;margin-right:7px;letter-spacing:.25px}
.copyrow{height:28px;display:flex;align-items:center;padding-left:7px}
label{flex:none}
.copyrow label{width:111px}
.combo{width:446px;height:22px;line-height:20px;border:1px solid #808080;border-radius:2px;background:linear-gradient(#f4f4f4,#d5d5d5);padding:0 3px;display:flex;justify-content:space-between;align-items:center;margin-right:8px}
.copyrow svg{width:17px;height:17px}
.tabs{height:23px;padding:2px 0 0 1px;position:relative;display:flex}
.tabline{position:absolute;left:1px;top:2px;width:598px;height:21px}
.tab{display:flex;align-items:center;gap:5px;height:21px}
.tab svg{width:17px;height:17px}
.one{padding-left:18px;width:156px}.two{width:110px}
.pane{width:584px;height:314px;margin-left:7px;border:1px solid #808080;border-top-color:#fff;border-left-color:#fff;padding:12px 0 0 8px}
.tools{display:flex;height:23px;margin-bottom:2px;align-items:center;padding-left:2px}
.sq{width:13px;height:13px;margin-right:5px;border:1px solid #aaa;border-radius:2px;background:linear-gradient(135deg,#fff,#e0e0e0);flex:none;display:flex;justify-content:center;align-items:center}
.sq.dn:before{content:"";width:4px;height:4px;border-right:1.500px solid #888;border-bottom:1.500px solid #888;transform:translateY(-1px) rotate(45deg)}
.sq.blue{border-color:#3465c9;background:linear-gradient(135deg,#fff,#d6e4ff)}
.blue.dn:before{border-color:#123c9a}
.gap{margin-left:105px}
.acts{display:flex;margin-left:198px;gap:11px}
.acts svg{width:16px;height:16px}
.acts .sel{margin-left:8px}
.cols{display:flex;height:202px}
.left{width:134px;margin-right:7px}
.search{display:flex;height:25px;align-items:flex-start}
.inp{height:22px;border:1px solid #808080;background:#fff;display:flex;justify-content:space-between;align-items:center;padding:0 3px 0 2px}
.search .inp{width:107px;justify-content:flex-end}
.er{width:17px;height:14px}
.fun{width:15px;height:13px;margin:4px 0 0 10px}
.list{height:177px;border:1px solid #808080;background:#fff;display:flex;flex-direction:column}
.lrow{height:16px;margin-top:1px;display:flex;color:#0a0aa8;line-height:16px;overflow:hidden}
.lrow .cb{margin:1px 1px 0 0}
.lrow span{background:#c0d2e8;flex:1;letter-spacing:0;padding-left:1px}
.table{width:424px;border:1px solid #808080}
.tr{display:grid;grid-template-columns:84px 85px 84px 85px 84px;height:16px;color:#0a0aa8;line-height:16px}
.tr span{background:#fff;border-right:1px solid #ddd;border-bottom:1px solid #ddd;padding-left:1px;overflow:hidden;letter-spacing:.2px}
.tr .tn{letter-spacing:-.1px}
.tr span:first-child{display:flex;justify-content:center;padding:1px 1px 0 0}
.th{height:19px;color:#111;line-height:20px}
.tr.th span{background:#e0e0e0;border-color:#808080;text-align:center;border-left:1px solid #fff;padding:0;letter-spacing:.3px}
.count{text-align:right;padding-right:10px;height:19px;line-height:16px}
.form{display:flex;align-items:center;height:25px;padding-left:7px}
.form label{width:173px}
.date{width:351px}.comm{width:378px}
.cal{width:14px;height:14px;margin-left:10px}
.tip{position:absolute;left:886px;top:229px;width:54px;height:17px;border:1px solid #58677a;background:#c0d2e8;line-height:16px;padding-left:3px;letter-spacing:-.2px}
.cursor{position:absolute;left:879px;top:208px;width:20px;height:22px}
```
